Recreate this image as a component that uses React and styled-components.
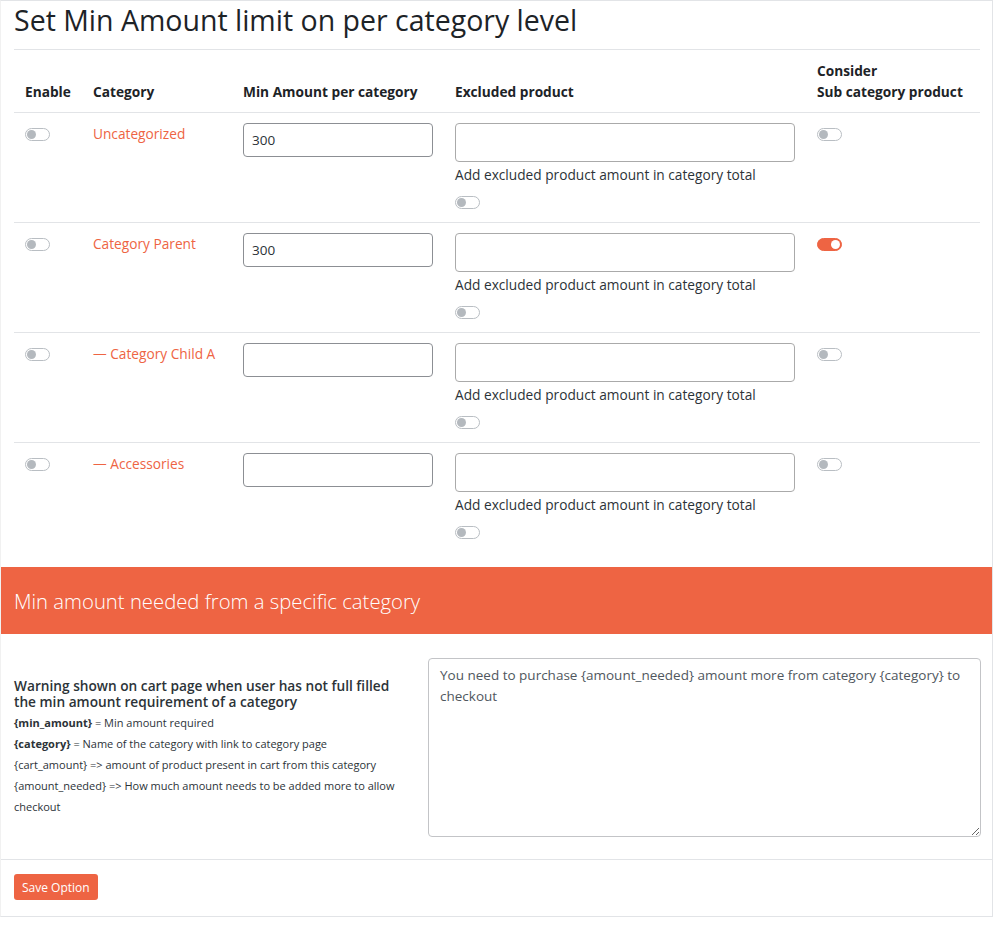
import React from "react";
import styled, { createGlobalStyle } from "styled-components";

const ORANGE = "#ee6443";
const FONT = `"Open Sans", "Liberation Sans", sans-serif`;

const Global = createGlobalStyle`
  html, body { margin: 0; padding: 0; background: #fff; }
  body { font-family: ${FONT}; color: #212529; }
  * { box-sizing: border-box; }
`;

const Panel = styled.div`
  width: 993px;
  border: 1px solid #e2e4e7;
  border-left-color: #f1f1f1;
  background: #fff;
`;

const Section = styled.div`
  padding: 0 12px 0 13px;
`;

const Title = styled.h3`
  margin: 0;
  padding: 2px 0 12px;
  font-size: 28.5px;
  line-height: 34px;
  font-weight: 500;
  color: #1d2327;
  border-bottom: 1px solid #e2e4e7;
`;

const Table = styled.table`
  width: 100%;
  border-collapse: collapse;
  table-layout: fixed;
  margin-bottom: 15px;
  font-size: 13.7px;
`;

const Th = styled.th`
  text-align: left;
  vertical-align: bottom;
  padding: 10px 11px 10px;
  font-weight: 700;
  font-size: 13.7px;
  line-height: 21px;
  color: #1d2327;
  border-bottom: 1px solid #e2e4e7;
`;

const Tr = styled.tr`
  & + & > td { border-top: 1px solid #e2e4e7; }
`;

const Td = styled.td`
  padding: 10px 11px 13px;
  vertical-align: top;
  line-height: 21px;
`;

const CatLink = styled.a`
  color: ${ORANGE};
  text-decoration: none;
  font-size: 13.7px;
  white-space: nowrap;
`;

const Input = styled.input`
  display: block;
  width: 190px;
  height: 34px;
  border: 1px solid #8c8f94;
  border-radius: 4px;
  padding: 0 8px;
  font-family: ${FONT};
  font-size: 13.5px;
  color: #2c3338;
  outline: none;
`;

const MultiBox = styled.div`
  width: 340px;
  height: 39px;
  border: 1px solid #aaa;
  border-radius: 4px;
  background: #fff;
`;

const Note = styled.div`
  margin-top: 2px;
  font-size: 13.7px;
  line-height: 21px;
  color: #2c3338;
  white-space: nowrap;
`;

const Toggle = styled.span`
  display: block;
  position: relative;
  width: 25px;
  height: 13px;
  margin-top: ${(p) => p.$mt || 5}px;
  border-radius: 7px;
  border: 1px solid ${(p) => (p.$on ? ORANGE : "#b9bec3")};
  background: ${(p) => (p.$on ? ORANGE : "#fff")};
  &::after {
    content: "";
    position: absolute;
    top: 1px;
    left: ${(p) => (p.$on ? "13px" : "1px")};
    width: 9px;
    height: 9px;
    border-radius: 50%;
    background: ${(p) => (p.$on ? "#fff" : "#b4b9be")};
  }
`;

const Banner = styled.div`
  background: ${ORANGE};
  color: #fff;
  height: 67px;
  display: flex;
  align-items: center;
  padding-left: 13px;
  font-size: 20.3px;
  font-weight: 300;
`;

const MessageRow = styled.div`
  display: grid;
  grid-template-columns: 414px 553px;
  align-items: center;
  padding: 24px 11px 22px 13px;
`;

const Help = styled.div`
  font-size: 11px;
  color: #2c3338;
`;

const HelpLine = styled.div`
  line-height: 21px;
  padding-right: 8px;
`;

const HelpTitle = styled.div`
  width: 385px;
  font-size: 13.7px;
  line-height: 16px;
  font-weight: 600;
  color: #2c3338;
  margin-bottom: 2px;
`;

const Key = styled.b`
  font-weight: 700;
`;

const TextArea = styled.textarea`
  display: block;
  width: 553px;
  height: 179px;
  border: 1px solid #c3c4c7;
  border-radius: 4px;
  padding: 6px 11px;
  font-family: ${FONT};
  font-size: 13.5px;
  line-height: 21px;
  color: #50575e;
  resize: vertical;
  outline: none;
`;

const Footer = styled.div`
  border-top: 1px solid #e2e4e7;
  padding: 14px 13px 16px;
`;

const Button = styled.button`
  display: block;
  height: 26px;
  padding: 0 8px;
  background: ${ORANGE};
  color: #fff;
  border: 0;
  border-radius: 3px;
  font-family: ${FONT};
  font-size: 12px;
  cursor: pointer;
`;

const rows = [
  { name: "Uncategorized", amount: "300", sub: false },
  { name: "Category Parent", amount: "300", sub: true },
  { name: "— Category Child A", amount: "", sub: false },
  { name: "— Accessories", amount: "", sub: false },
];

export default function App() {
  return (
    <>
      <Global />
      <Panel>
        <Section>
          <Title>Set Min Amount limit on per category level</Title>
          <Table>
            <colgroup>
              <col style={{ width: 68 }} />
              <col style={{ width: 150 }} />
              <col style={{ width: 212 }} />
              <col style={{ width: 362 }} />
              <col />
            </colgroup>
            <thead>
              <tr>
                <Th>Enable</Th>
                <Th>Category</Th>
                <Th>Min Amount per category</Th>
                <Th>Excluded product</Th>
                <Th>
                  Consider
                  <br />
                  Sub category product
                </Th>
              </tr>
            </thead>
            <tbody>
              {rows.map((r) => (
                <Tr key={r.name}>
                  <Td>
                    <Toggle />
                  </Td>
                  <Td>
                    <CatLink href="#">{r.name}</CatLink>
                  </Td>
                  <Td>
                    <Input defaultValue={r.amount} />
                  </Td>
                  <Td>
                    <MultiBox />
                    <Note>Add excluded product amount in category total</Note>
                    <Toggle $mt={11} />
                  </Td>
                  <Td>
                    <Toggle $on={r.sub} />
                  </Td>
                </Tr>
              ))}
            </tbody>
          </Table>
        </Section>
        <Banner>Min amount needed from a specific category</Banner>
        <MessageRow>
          <div>
            <HelpTitle>
              Warning shown on cart page when user has not full filled the min
              amount requirement of a category
            </HelpTitle>
            <Help>
              <HelpLine>
                <Key>{"{min_amount}"}</Key> = Min amount required
              </HelpLine>
              <HelpLine>
                <Key>{"{category}"}</Key> = Name of the category with link to
                category page
              </HelpLine>
              <HelpLine>
                {"{cart_amount}"} =&gt; amount of product present in cart from
                this category
              </HelpLine>
              <HelpLine>
                {"{amount_needed}"} =&gt; How much amount needs to be added more
                to allow
              </HelpLine>
              <HelpLine>checkout</HelpLine>
            </Help>
          </div>
          <TextArea defaultValue="You need to purchase {amount_needed} amount more from category {category} to checkout" />
        </MessageRow>
        <Footer>
          <Button>Save Option</Button>
        </Footer>
      </Panel>
    </>
  );
}
